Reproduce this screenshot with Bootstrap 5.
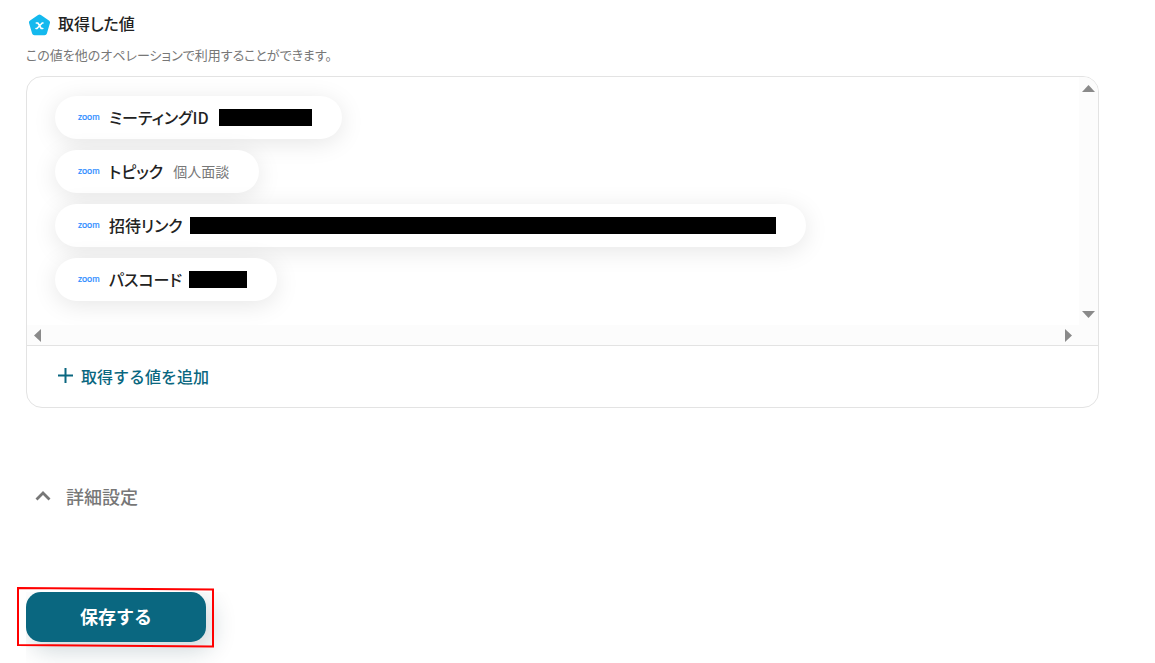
<!DOCTYPE html>
<html lang="ja">
<head>
<meta charset="utf-8">
<meta name="viewport" content="width=device-width, initial-scale=1">
<title>取得した値</title>
<link rel="stylesheet" href="https://cdn.jsdelivr.net/npm/bootstrap@5.3.0/dist/css/bootstrap.min.css">
<style>
body{font-family:"Noto Sans CJK JP",sans-serif;font-feature-settings:"palt";color:#222;background:#fff}
.page{padding:11px 56px 21px 26px}
.heading{font-size:16px;line-height:24px;font-weight:500}
.heading span,.pill-label,.pill-value{padding-bottom:2px}
.hint{font-size:13px;line-height:20px;color:#777;padding-bottom:3px}
.panel{border:1px solid #e3e3e3;border-radius:16px}
.values{padding:19px 28px 24px;row-gap:11px;justify-items:start;overflow:hidden}
.pill{height:43px;padding:0 30px 0 23px;gap:10px;border-radius:22px;background:#fff;box-shadow:0 4px 24px rgba(0,0,0,.1)}
.pill-tight{gap:7px}
.brand{font:400 9px/12px Lato,sans-serif;color:#2d8cff;width:22px;margin-right:9px;padding-bottom:2px;-webkit-text-stroke:.2px #2d8cff}
.pill-label{font-size:16px;line-height:24px;font-weight:500}
.pill-value{font-size:14px;line-height:20px;color:#777}
.masked{height:17px;background:#000}
.bar-v,.bar-h{background:#fcfcfc}
.bar-v{width:19px;padding:8px 3px 7px;border-radius:0 15px 0 0}
.bar-h{height:20px;padding:0 26px 0 7px}
.bar-v button,.bar-h button{border:0;padding:0;background:none;line-height:0}
.panel-foot{border-top:1px solid #e3e3e3;height:62px;padding:0 31px 2px}
.add{color:#0a6780;font-size:16px;line-height:24px;font-weight:500}
.details{color:#777;font-size:18px;line-height:28px;font-weight:500;margin-top:74px;padding:0 9px;gap:15px}
.save-area{width:180px;margin-top:82px}
.save-clip{clip-path:inset(0 -40px -40px 0)}
.save{height:50px;border-radius:15px;background:#0a6780;color:#fff;font-size:18px;font-weight:700;padding-bottom:8px;box-shadow:6px 8px 24px rgba(10,50,65,.2)}
.save:hover{background:#0a6780;color:#fff}
.outline{left:-10px;top:-6px}
</style>
</head>
<body>
<main class="page">
  <h1 class="heading d-flex align-items-center gap-2 mb-0">
    <svg width="24" height="24" viewBox="0 0 24 24" aria-hidden="true"><path d="M13.500 5 21.500 10.500 18.500 20.700H8.500L5.500 10.500Z" fill="#14b9ee" stroke="#14b9ee" stroke-width="5" stroke-linejoin="round"/><path d="M10.300 11h1.600l3.300 5.500h1.600M17 11h-.800L11 16.500h-1" fill="none" stroke="#fff" stroke-width="1.600" stroke-linecap="round" stroke-linejoin="round"/></svg>
    <span>取得した値</span>
  </h1>
  <p class="hint mt-2 mb-0">この値を他のオペレーションで利用することができます。</p>
  <section class="panel mt-2 pt-0">
    <div class="d-flex">
      <ul class="values list-unstyled d-grid flex-grow-1 mb-0">
        <li class="pill d-flex align-items-center"><span class="d-flex align-items-center"><span class="brand">zoom</span><span class="pill-label">ミーティングID</span></span><span class="masked" style="width:93px"></span></li>
        <li class="pill d-flex align-items-center"><span class="d-flex align-items-center"><span class="brand">zoom</span><span class="pill-label">トピック</span></span><span class="pill-value">個人面談</span></li>
        <li class="pill pill-tight d-flex align-items-center"><span class="d-flex align-items-center"><span class="brand">zoom</span><span class="pill-label">招待リンク</span></span><span class="masked" style="width:586px"></span></li>
        <li class="pill pill-tight d-flex align-items-center"><span class="d-flex align-items-center"><span class="brand">zoom</span><span class="pill-label">パスコード</span></span><span class="masked" style="width:58px"></span></li>
      </ul>
      <div class="bar-v d-flex flex-column justify-content-between">
        <button type="button" aria-label="上へ"><svg width="13" height="7" viewBox="0 0 13 7"><path d="M6.500 0 13 7H0Z" fill="#8a8a8a"/></svg></button>
        <button type="button" aria-label="下へ"><svg width="13" height="7" viewBox="0 0 13 7"><path d="M0 0H13L6.500 7Z" fill="#8a8a8a"/></svg></button>
      </div>
    </div>
    <div class="bar-h d-flex justify-content-between align-items-center">
      <button type="button" aria-label="左へ"><svg width="7" height="13" viewBox="0 0 7 13"><path d="M7 0V13L0 6.500Z" fill="#8a8a8a"/></svg></button>
      <button type="button" aria-label="右へ"><svg width="7" height="13" viewBox="0 0 7 13"><path d="M0 0V13L7 6.500Z" fill="#8a8a8a"/></svg></button>
    </div>
    <div class="panel-foot d-flex align-items-center">
      <button type="button" class="add btn border-0 p-0 d-flex align-items-center gap-2"><svg width="15" height="15" viewBox="0 0 15 15" aria-hidden="true"><path d="M7.500 0V15M0 7.500H15" stroke="#0a6780" stroke-width="2"/></svg>取得する値を追加</button>
    </div>
  </section>
  <button type="button" class="details btn border-0 d-flex align-items-center" aria-expanded="false"><svg width="16" height="10" viewBox="0 0 16 10" aria-hidden="true"><path d="M1.500 8.500 8 2l6.500 6.500" fill="none" stroke="#777" stroke-width="2.800"/></svg>詳細設定</button>
  <div class="save-area position-relative">
    <div class="save-clip"><button type="button" class="save btn border-0 w-100">保存する</button></div>
    <svg class="outline position-absolute pe-none" width="200" height="62" viewBox="0 0 200 62" aria-hidden="true"><path d="M2 2 197 3.500V60.500L2 59Z" fill="none" stroke="#f00" stroke-width="2"/></svg>
  </div>
</main>
<script src="https://cdn.jsdelivr.net/npm/bootstrap@5.3.0/dist/js/bootstrap.bundle.min.js"></script>
</body>
</html>
